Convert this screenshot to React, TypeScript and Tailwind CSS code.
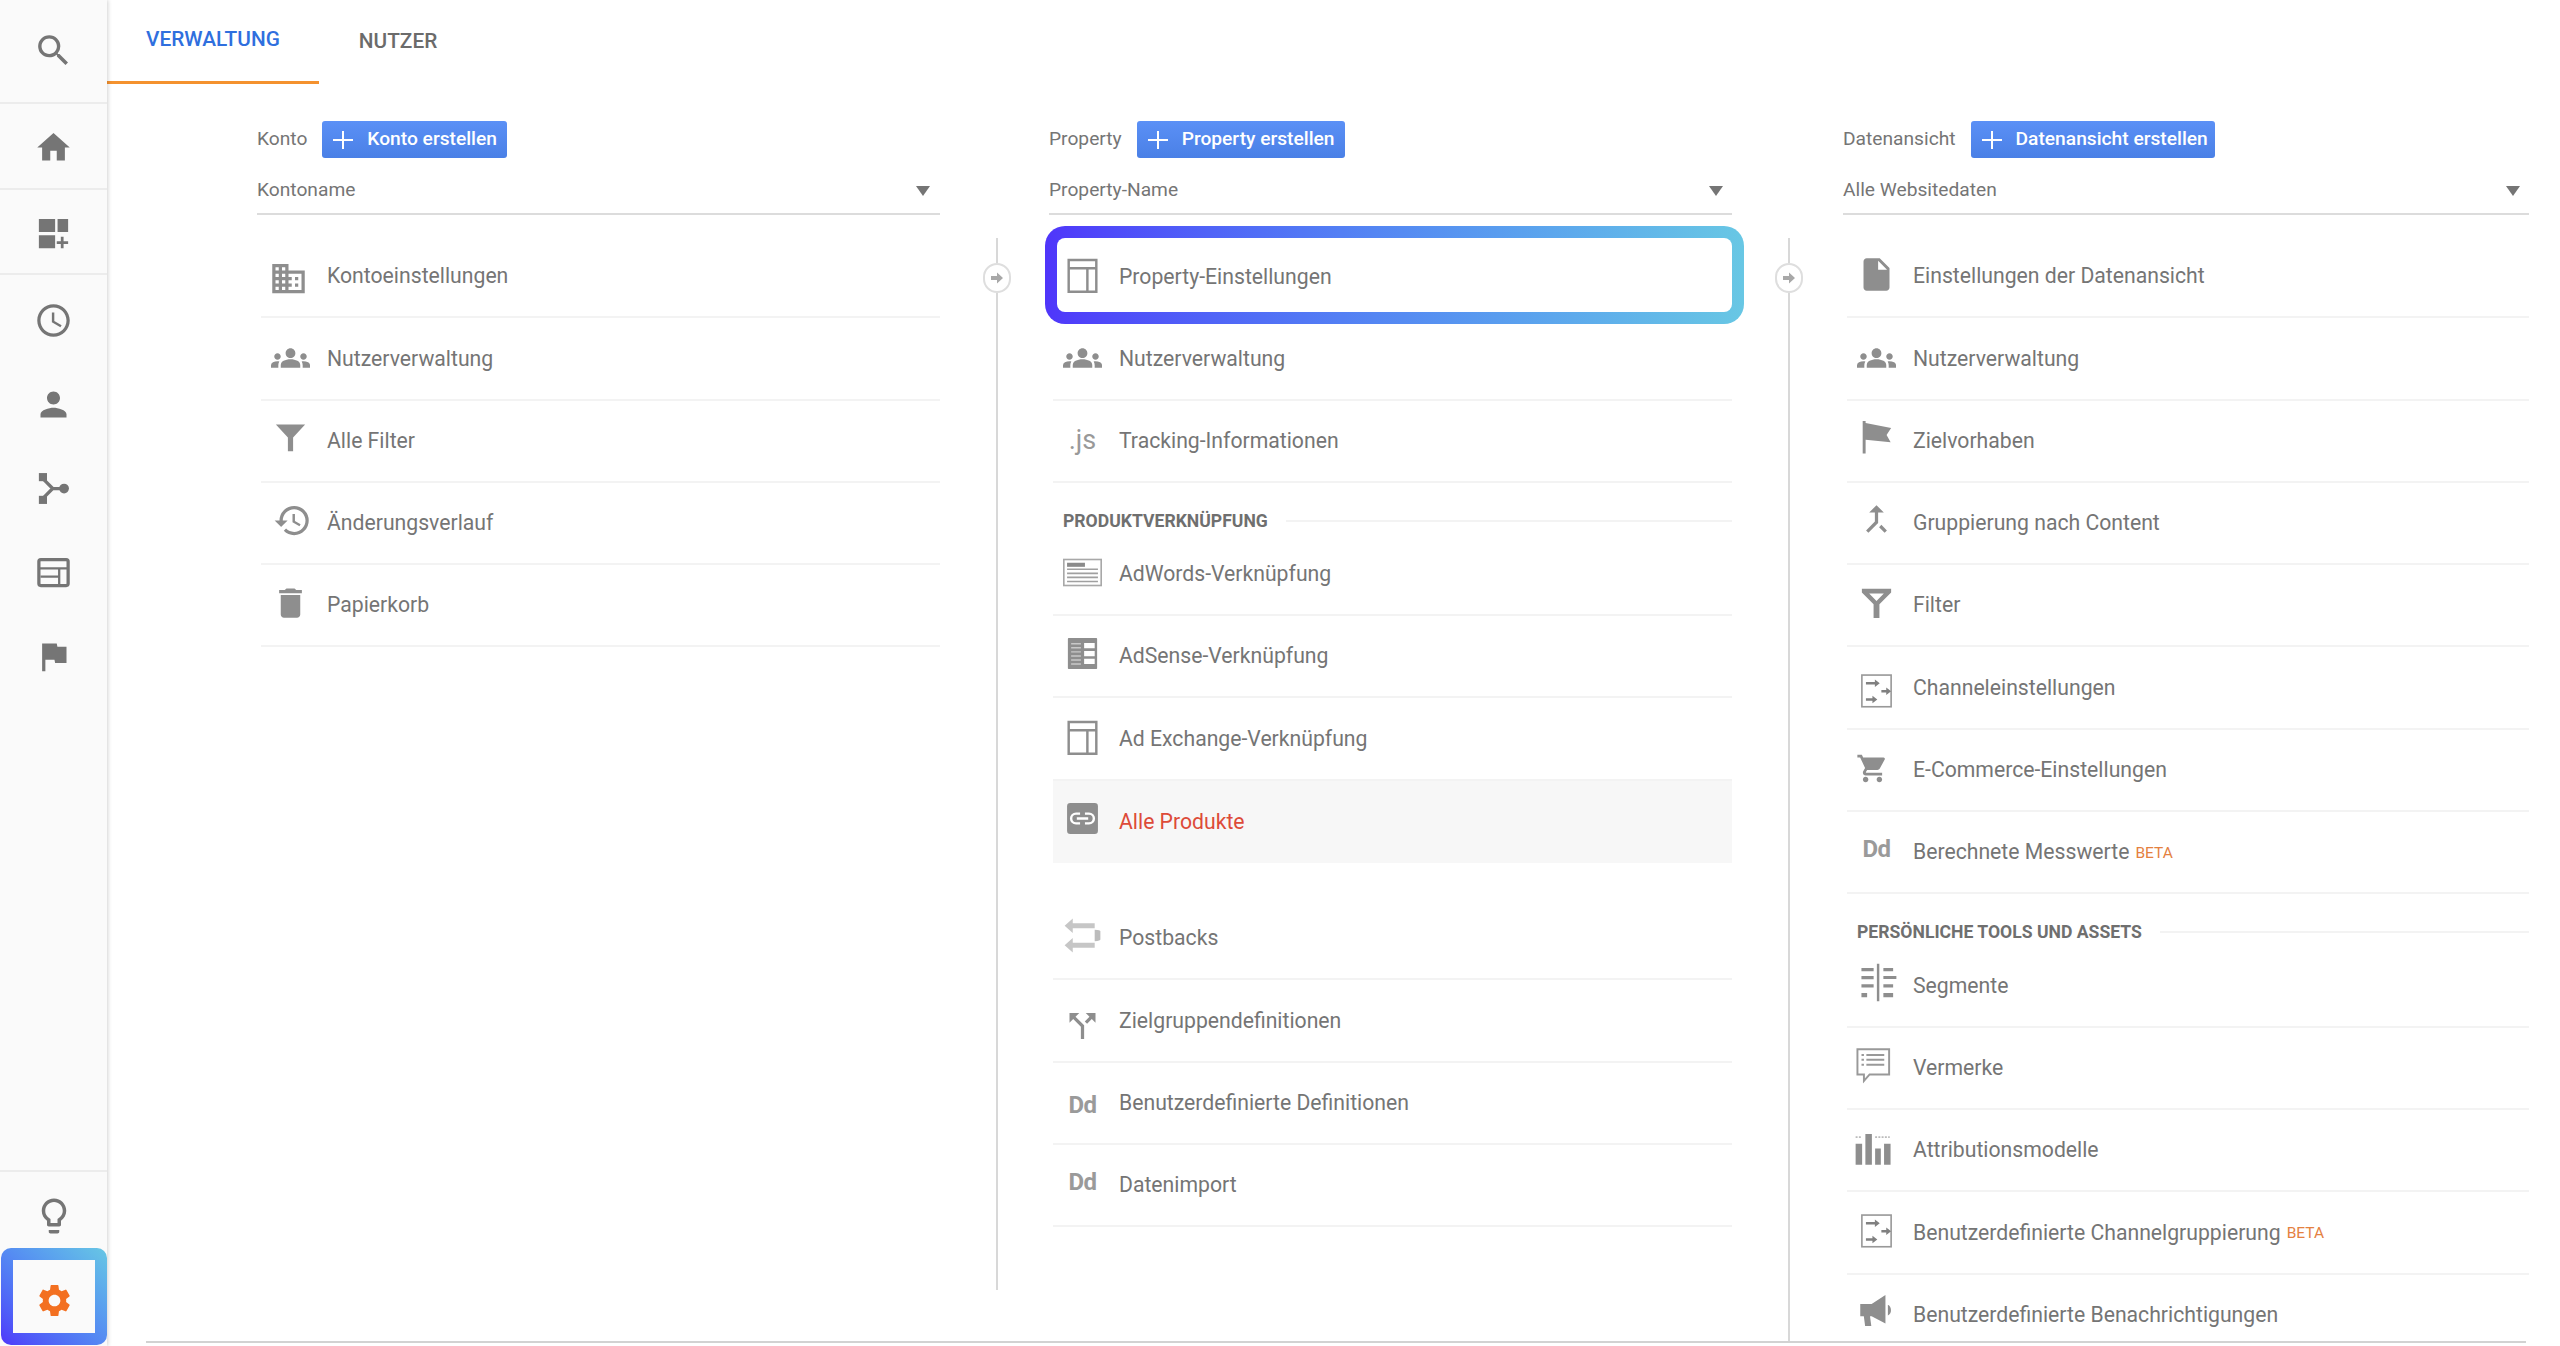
import React from 'react';
import {
  MdSearch, MdHome, MdAccessTime, MdPerson, MdFlag, MdLightbulbOutline, MdSettings,
  MdBusiness, MdGroups, MdHistory, MdDelete, MdInsertDriveFile, MdCallMerge, MdCallSplit, MdShoppingCart,
} from 'react-icons/md';

const FunnelIcon = () => (
  <svg viewBox="0 0 24 24" className="w-[39px] h-[39px]" fill="currentColor">
    <path d="M3 4h18l-7.4 8v8.5h-3.2V12z" />
  </svg>
);

const FilterOutlineIcon = () => (
  <svg viewBox="0 0 24 24" className="w-[39px] h-[39px]" fill="currentColor">
    <path fillRule="evenodd" d="M3 3.5h18v2.4l-7.2 7.2v8.4h-3.6v-8.4L3 5.900zM7.500 6.400l4.500 4.600 4.500-4.600z" />
  </svg>
);

const LayoutIcon = () => (
  <svg viewBox="0 0 24 24" className="w-[39px] h-[39px]" fill="none" stroke="currentColor" strokeWidth="1.500">
    <path d="M3.500 2.500h17v19.500h-17zM3.500 7.500h17M15 7.500v14.500" />
  </svg>
);

const AdWordsIcon = () => (
  <svg viewBox="0 0 24 24" className="w-[39px] h-[39px]">
    <rect x="0.500" y="4" width="23" height="16" fill="none" stroke="#a8a8a8" strokeWidth="1" />
    <rect x="2.500" y="6" width="11" height="2.500" fill="#8a8a8a" />
    <path d="M2.500 10h19M2.500 12.500h19M2.500 15h19M2.500 17.500h19" stroke="#a0a0a0" strokeWidth="1" />
  </svg>
);

const AdSenseIcon = () => (
  <svg viewBox="0 0 24 24" className="w-[39px] h-[39px]">
    <rect x="3" y="2.500" width="18" height="19" rx="0.500" fill="currentColor" />
    <path d="M5 6h6M5 8.500h6M5 11h6M5 13.500h6M5 16h6M5 18.500h6" stroke="#c8c8c8" strokeWidth="0.900" />
    <path d="M13 5.500h6.500v3.200H13zM13 10.500h6.500v3.200H13zM13 15.200h6.500v3.200H13z" fill="#fff" />
  </svg>
);

const LinkBoxIcon = () => (
  <svg viewBox="0 0 24 24" className="w-[39px] h-[39px]">
    <rect x="2.500" y="2.500" width="19" height="19" rx="2" fill="currentColor" />
    <path d="M10.500 9H8a3 3 0 0 0 0 6h2.500M13.500 9H16a3 3 0 0 1 0 6h-2.500M8.500 12h7" fill="none" stroke="#fff" strokeWidth="1.500" />
  </svg>
);

const PostbackIcon = () => (
  <svg viewBox="0 0 24 24" className="w-[43px] h-[43px]" fill="#c6c6c6">
    <path d="M1 6l5-4.500v3h13.500v3H6v3zM1 18l5-4.500v3h13.500v3H6v3z" />
    <path d="M19.500 8.500c2.500 0 3.500.5 3.500 1v5c0 .5-1 1-3.500 1z" fill="#bcbcbc" />
  </svg>
);

const ChannelIcon = () => (
  <svg viewBox="0 0 24 24" className="w-[39px] h-[39px]">
    <rect x="3" y="2.500" width="18" height="19.500" fill="none" stroke="#999" strokeWidth="1" />
    <path d="M5.500 7.500h6M15 12.500h4.500M5.500 17.500h4.500" stroke="#808080" strokeWidth="1.500" />
    <path d="M11 5.200l3 2.300-3 2.300zM18 10.200l3 2.300-3 2.300zM9.500 15.200l3 2.300-3 2.300z" fill="#808080" />
  </svg>
);

const SegmentIcon = () => (
  <svg viewBox="0 0 24 24" className="w-[39px] h-[39px]" fill="currentColor">
    <path d="M11 .5h1.500v23H11zM1.500 3h7.500v2H1.500zM1.500 8h7.500v2H1.500zM1.500 13h7.500v2H1.500zM1.500 18.500h3.500v2.500H1.500zM15 3h6v2h-6zM15 8h8v1.800h-8zM15 13h6v2h-6zM15 18.500h6v2.500h-6z" />
  </svg>
);

const NoteIcon = () => (
  <svg viewBox="0 0 24 24" className="w-[39px] h-[39px]">
    <path d="M1.500 2h19.500v15.500H9l-3.500 4v-4h-4z" fill="none" stroke="#999" strokeWidth="1.200" />
    <path d="M4 5.500h1.500M7 5.500h11M4 8.500h1.500M7 8.500h11M4 11.500h1.500M7 11.500h11" stroke="#999" strokeWidth="1.200" />
  </svg>
);

const AttributionIcon = () => (
  <svg viewBox="0 0 24 24" className="w-[39px] h-[39px]" fill="currentColor">
    <path d="M1 9h4v13H1zM7 3h4v19H7zM13 12h3.500v10H13zM18.500 9H22.500v13h-4z" />
    <path d="M1 5h4M13 5h9" stroke="#bbb" strokeWidth="1" strokeDasharray="1.200 0.800" />
  </svg>
);

const MegaphoneIcon = () => (
  <svg viewBox="0 0 24 24" className="w-[39px] h-[39px]" fill="currentColor">
    <path d="M2 8h7l8.500-5.500v17.500L9 15.500H8l.8 6H5l-.8-6H2zM19 8.500c2.300.6 2.800 5.800 0 6.500z" />
  </svg>
);

const WavingFlagIcon = () => (
  <svg viewBox="0 0 24 24" className="w-[39px] h-[39px]" fill="currentColor">
    <path d="M3.500 2.500h1.800v1.200l15.700 3-2.800 4.300 2.500 4.500-15.400-1.500v8.500H3.500z" />
  </svg>
);

const DashboardPlusIcon = () => (
  <svg viewBox="0 0 24 24" className="w-[39px] h-[39px]" fill="currentColor">
    <path d="M3 3h10v8H3zM14.500 3H21v8h-6.500zM3 13h10v8H3zM16.500 14h1.700v2.800H21v1.700h-2.800V21h-1.700v-2.500H14v-1.700h2.500z" />
  </svg>
);

const ShareNodesIcon = () => (
  <svg viewBox="0 0 24 24" className="w-[39px] h-[39px]">
    <path d="M5 5.500l6.500 6.500H18M5 18.500l6.500-6.500" fill="none" stroke="currentColor" strokeWidth="2" />
    <rect x="3" y="2.500" width="5" height="5" fill="currentColor" />
    <rect x="3" y="16.500" width="5" height="5" fill="currentColor" />
    <circle cx="18.500" cy="12" r="3" fill="currentColor" />
  </svg>
);

const CardIcon = () => (
  <svg viewBox="0 0 24 24" className="w-[39px] h-[39px]" fill="none" stroke="currentColor">
    <rect x="3" y="4" width="18" height="16" rx="1.200" strokeWidth="2" />
    <path d="M3 9.500h18M4 14.500h11M15.500 9.500v10" strokeWidth="1.400" />
  </svg>
);

const PlusIcon = () => (
  <svg viewBox="0 0 24 24" className="w-[24px] h-[24px] shrink-0" fill="none" stroke="white" strokeWidth="2">
    <path d="M12 3v18M2 12h20" />
  </svg>
);

const Caret = () => (
  <svg viewBox="0 0 14 10" className="w-[14px] h-[10px]" fill="#757575">
    <path d="M0 0h14L7 10z" />
  </svg>
);

const Dd = () => <span className="text-[24px] leading-none font-bold text-[#9a9a9a] tracking-[-0.5px]">Dd</span>;

type RowItem = {
  label: string;
  icon: React.ReactNode;
  shift?: string;
  beta?: boolean;
  active?: boolean;
};

const kontoRows: RowItem[] = [
  { label: 'Kontoeinstellungen', icon: <MdBusiness size={43} />, shift: 'translate-y-[2px] -translate-x-[2px]' },
  { label: 'Nutzerverwaltung', icon: <MdGroups size={44} /> },
  { label: 'Alle Filter', icon: <FunnelIcon />, shift: '-translate-y-[3px]' },
  { label: 'Änderungsverlauf', icon: <MdHistory size={39} />, shift: '-translate-y-[3px] translate-x-[2px]' },
  { label: 'Papierkorb', icon: <MdDelete size={46} />, shift: '-translate-y-[2px]' },
];

const propertyTop: RowItem[] = [
  { label: 'Nutzerverwaltung', icon: <MdGroups size={44} /> },
  { label: 'Tracking-Informationen', icon: <span className="text-[27px] leading-none text-[#999]">.js</span> },
];

const produktRows: RowItem[] = [
  { label: 'AdWords-Verknüpfung', icon: <AdWordsIcon />, shift: '-translate-y-[2px]' },
  { label: 'AdSense-Verknüpfung', icon: <AdSenseIcon />, shift: '-translate-y-[3px]' },
  { label: 'Ad Exchange-Verknüpfung', icon: <LayoutIcon />, shift: '-translate-y-[1px]' },
  { label: 'Alle Produkte', icon: <LinkBoxIcon />, shift: '-translate-y-[3px]', active: true },
];

const propertyBottom: RowItem[] = [
  { label: 'Postbacks', icon: <PostbackIcon />, shift: '-translate-y-[3px]' },
  { label: 'Zielgruppendefinitionen', icon: <MdCallSplit size={42} />, shift: 'translate-y-[5px]' },
  { label: 'Benutzerdefinierte Definitionen', icon: <Dd />, shift: 'translate-y-[2px]' },
  { label: 'Datenimport', icon: <Dd />, shift: '-translate-y-[3px]' },
];

const ansichtRows: RowItem[] = [
  { label: 'Einstellungen der Datenansicht', icon: <MdInsertDriveFile size={39} />, shift: '-translate-y-[2px]' },
  { label: 'Nutzerverwaltung', icon: <MdGroups size={44} /> },
  { label: 'Zielvorhaben', icon: <WavingFlagIcon />, shift: '-translate-y-[4px]' },
  { label: 'Gruppierung nach Content', icon: <MdCallMerge size={42} />, shift: '-translate-y-[4px]' },
  { label: 'Filter', icon: <FilterOutlineIcon />, shift: '-translate-y-[3px]' },
  { label: 'Channeleinstellungen', icon: <ChannelIcon />, shift: 'translate-y-[3px]' },
  { label: 'E-Commerce-Einstellungen', icon: <MdShoppingCart size={33} />, shift: '-translate-y-[1px] -translate-x-[4px]' },
  { label: 'Berechnete Messwerte', icon: <Dd />, shift: '-translate-y-[3px]', beta: true },
];

const toolRows: RowItem[] = [
  { label: 'Segmente', icon: <SegmentIcon />, shift: '-translate-y-[3px] translate-x-[2px]' },
  { label: 'Vermerke', icon: <NoteIcon />, shift: '-translate-y-[2px] -translate-x-[2px]' },
  { label: 'Attributionsmodelle', icon: <AttributionIcon />, shift: '-translate-y-[2px] -translate-x-[3px]' },
  { label: 'Benutzerdefinierte Channelgruppierung', icon: <ChannelIcon />, shift: '-translate-y-[2px]', beta: true },
  { label: 'Benutzerdefinierte Benachrichtigungen', icon: <MegaphoneIcon />, shift: '-translate-y-[4px]' },
];

function Row({ item }: { item: RowItem }) {
  return (
    <div
      className={
        item.active
          ? 'relative flex items-center h-[82.3px] ml-[4px] pl-[10px] bg-[#f7f7f7]'
          : 'relative flex items-center h-[82.3px] ml-[4px] pl-[10px] border-b-2 border-[#f3f3f3]'
      }
    >
      <div className={`w-[39px] h-[39px] flex items-center justify-center shrink-0 text-[#8e8e8e] ${item.shift ?? ''}`}>
        {item.icon}
      </div>
      <span className={item.active ? 'ml-[17px] text-[21.2px] text-[#dd4b39]' : 'ml-[17px] text-[21.2px] text-[#757575]'}>
        {item.label}
      </span>
      {item.beta && <span className="ml-[6px] mt-[3px] text-[15.5px] text-[#e4813f]">BETA</span>}
    </div>
  );
}

function SectionHeader({ title }: { title: string }) {
  return (
    <div className="flex items-center h-[51px] pt-[25px] pl-[14px] gap-[18px]">
      <span className="text-[17.6px] leading-[26px] font-bold text-[#6f6f6f] whitespace-nowrap">{title}</span>
      <div className="flex-1 h-[2px] bg-[#f3f3f3]" />
    </div>
  );
}

function ColumnHead({ title, action, value, width, caretClass }: { title: string; action: string; value: string; width: string; caretClass: string }) {
  return (
    <>
      <div className="flex items-center h-[37px] gap-[15px]">
        <span className="text-[19.200px] text-[#757575]">{title}</span>
        <button className={`flex items-center h-[37px] rounded-[3px] bg-linear-to-b from-[#5b90f6] to-[#4a80e6] text-white text-[19.200px] font-medium ${width}`}>
          <span className="ml-[9px] mr-[12px] flex"><PlusIcon /></span>
          {action}
        </button>
      </div>
      <div className="flex items-center justify-between h-[57px] pt-[10px] border-b-2 border-[#dcdcdc]">
        <span className="text-[19.200px] text-[#757575]">{value}</span>
        <span className={`flex ${caretClass}`}><Caret /></span>
      </div>
    </>
  );
}

function Connector({ lineClass, widthClass }: { lineClass: string; widthClass: string }) {
  return (
    <div className={`flex flex-col items-center shrink-0 pt-[154px] ${widthClass}`}>
      <div className="w-[2px] h-[25px] bg-[#d8d8d8]" />
      <div className="w-[28px] h-[30px] shrink-0 rounded-full border-2 border-[#dedede] bg-white flex items-center justify-center">
        <svg viewBox="0 0 14 14" className="w-[14px] h-[14px]" fill="#a8a8a8">
          <path d="M1 5h6V1.500L13 7l-6 5.500V9H1z" />
        </svg>
      </div>
      <div className={`w-[2px] bg-[#d8d8d8] ${lineClass}`} />
    </div>
  );
}

const sideIcon = 'flex items-center justify-center text-[#757575]';

export default function App() {
  return (
    <div className="flex h-[1346px] overflow-hidden bg-white [font-family:Roboto,sans-serif]">
      {/* Linke Leiste */}
      <aside className="relative w-[107px] shrink-0 flex flex-col bg-[#fafafa] shadow-[1px_0_4px_rgba(0,0,0,0.18)]">
        <div className={`${sideIcon} h-[104px] border-b-2 border-[#ececec] pb-[2px]`}><MdSearch size={41} /></div>
        <div className={`${sideIcon} h-[86px] border-b-2 border-[#ececec] pt-[3px]`}><MdHome size={39} /></div>
        <div className={`${sideIcon} h-[85px] border-b-2 border-[#ececec] pt-[3px]`}><DashboardPlusIcon /></div>
        <div className="pt-[3px]">
          <div className={`${sideIcon} h-[84px]`}><MdAccessTime size={39} /></div>
          <div className={`${sideIcon} h-[84px]`}><MdPerson size={39} /></div>
          <div className={`${sideIcon} h-[84px]`}><ShareNodesIcon /></div>
          <div className={`${sideIcon} h-[84px]`}><CardIcon /></div>
          <div className={`${sideIcon} h-[84px]`}><MdFlag size={39} /></div>
        </div>
        <div className={`${sideIcon} mt-auto h-[78px] border-t-2 border-[#ececec] pt-[12px]`}><MdLightbulbOutline size={42} /></div>
        <div className="h-[97px] mb-[1px] ml-[1px] p-[12px] rounded-[10px] bg-linear-to-tr from-[#4f35fa] to-[#68c7e4]">
          <div className="h-full bg-[#fafafa] flex items-center justify-center text-[#f37021] pt-[8px]">
            <MdSettings size={39} />
          </div>
        </div>
      </aside>

      <main className="flex-1 min-w-0 flex flex-col">
        <nav className="flex h-[84px] shrink-0">
          <div className="flex items-center px-[39px] h-full border-b-[3px] border-[#f4922f] text-[20.800px] font-medium text-[#2f6fde] pb-[1px]">VERWALTUNG</div>
          <div className="flex items-center px-[40px] h-full text-[20.800px] font-medium text-[#6b6b6b] pb-[1px]">NUTZER</div>
        </nav>

        <div className="flex flex-1 min-h-0 overflow-hidden pl-[150px]">
          {/* Konto */}
          <section className="w-[683px] shrink-0 pt-[37px]">
            <ColumnHead title="Konto" action="Konto erstellen" value="Kontoname" width="w-[185px]" caretClass="mr-[10px]" />
            <div className="mt-[21px]">
              {kontoRows.map((r) => <Row key={r.label} item={r} />)}
            </div>
          </section>

          <Connector widthClass="w-[109px] pl-[5px]" lineClass="h-[997px]" />

          {/* Property */}
          <section className="w-[683px] shrink-0 pt-[37px]">
            <ColumnHead title="Property" action="Property erstellen" value="Property-Name" width="w-[208px]" caretClass="mr-[9px]" />
            <div className="mt-[21px]">
              <div className="relative flex items-center h-[82.3px] ml-[4px] pl-[10px]">
                <div className="absolute -top-[10px] -left-[8px] -right-[12px] h-[98px] p-[12px] rounded-[20px] bg-linear-to-r from-[#4f35fa] to-[#68c7e4]">
                  <div className="h-full rounded-[8px] bg-white" />
                </div>
                <div className="relative w-[39px] h-[39px] flex items-center justify-center shrink-0 text-[#8e8e8e] -translate-y-[2px]"><LayoutIcon /></div>
                <span className="relative ml-[17px] text-[21.2px] text-[#757575]">Property-Einstellungen</span>
              </div>
              {propertyTop.map((r) => <Row key={r.label} item={r} />)}
              <SectionHeader title="PRODUKTVERKNÜPFUNG" />
              {produktRows.map((r) => <Row key={r.label} item={r} />)}
              <div className="mt-[35px]">
                {propertyBottom.map((r) => <Row key={r.label} item={r} />)}
              </div>
            </div>
          </section>

          <Connector widthClass="w-[111px] pl-[3px]" lineClass="flex-1" />

          {/* Datenansicht */}
          <section className="w-[686px] shrink-0 pt-[37px]">
            <ColumnHead title="Datenansicht" action="Datenansicht erstellen" value="Alle Websitedaten" width="w-[244px]" caretClass="mr-[9px]" />
            <div className="mt-[21px]">
              {ansichtRows.map((r) => <Row key={r.label} item={r} />)}
              <SectionHeader title="PERSÖNLICHE TOOLS UND ASSETS" />
              {toolRows.map((r) => <Row key={r.label} item={r} />)}
            </div>
          </section>
        </div>

        <div className="h-[2px] shrink-0 mb-[3px] ml-[39px] mr-[34px] bg-[#d2d2d2]" />
      </main>
    </div>
  );
}
